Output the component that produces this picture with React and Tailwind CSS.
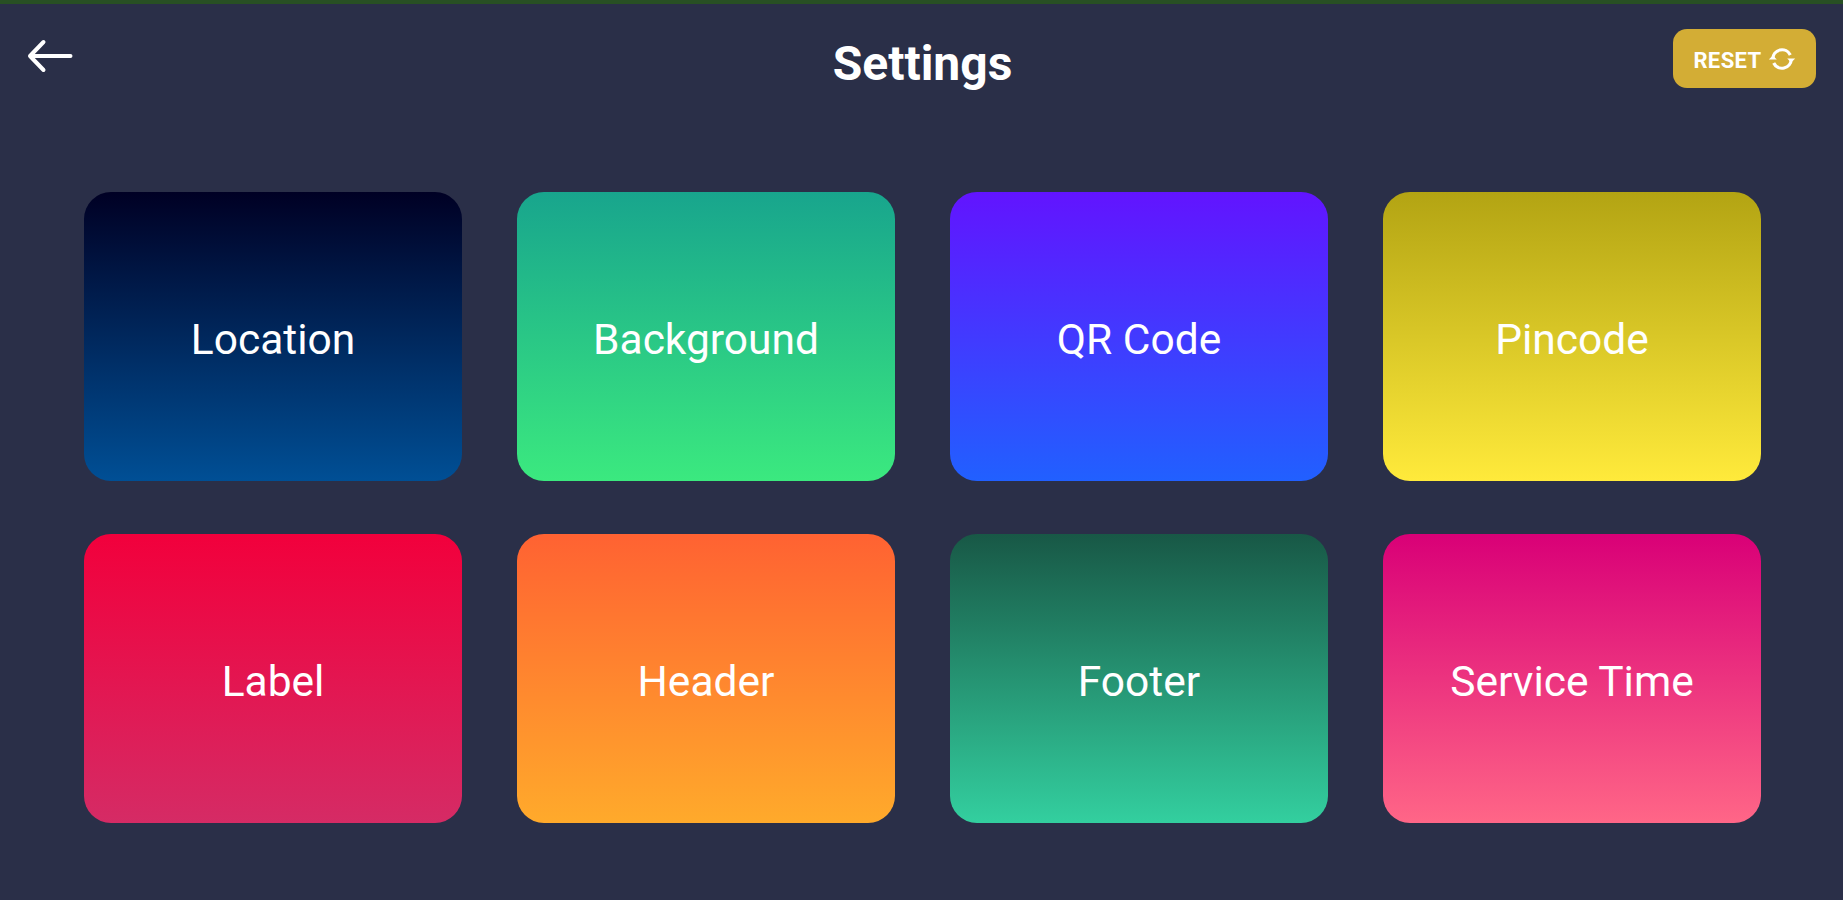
const rows = [
  [
    ["Location", "from-[#000024] to-[#004f95]"],
    ["Background", "from-[#18a58d] to-[#3be97f]"],
    ["QR Code", "from-[#6214ff] to-[#2160ff]"],
    ["Pincode", "from-[#b3a413] to-[#ffea3b]"],
  ],
  [
    ["Label", "from-[#f2003c] to-[#d52b65]"],
    ["Header", "from-[#ff6232] to-[#ffaa2b]"],
    ["Footer", "from-[#185846] to-[#33cf9f]"],
    ["Service Time", "from-[#d90077] to-[#ff6687]"],
  ],
];

export default function App() {
  return (
    <div className="flex h-[900px] w-[1843px] flex-col overflow-hidden border-t-4 border-[#285024] bg-[#2a2f48] font-[Roboto,sans-serif] text-white">
      <header className="grid h-[120px] grid-cols-[1fr_auto_1fr] items-start pr-[27px] pl-[27px]">
        <button aria-label="Back" className="mt-[34px] w-fit">
          <svg width="50" height="36" viewBox="0 0 50 36" fill="none" stroke="currentColor" strokeWidth="4" strokeLinecap="round" strokeLinejoin="round">
            <path d="M43.500 18H3M16.500 4L3 18l13.500 14" />
          </svg>
        </button>
        <h1 className="mt-[32px] pl-[2px] text-[48px] leading-[56px] font-bold">Settings</h1>
        <button className="mt-[25px] flex h-[59px] w-[143px] items-center justify-center gap-[6px] justify-self-end rounded-[14px] bg-[#d3ad35]">
          <span className="pt-[4px] text-[22px] leading-none font-bold tracking-[0.4px]">RESET</span>
          <svg width="28" height="26" viewBox="0 0 28 26" fill="none" stroke="currentColor" strokeWidth="3.2">
            <path d="M4.800 13A9.200 9.200 0 0 1 22.300 9" />
            <path d="M23.200 13A9.200 9.200 0 0 1 5.700 17" />
            <path d="M0.800 13.500L4.800 9.500L8.800 13.500Z" fill="currentColor" stroke="none" />
            <path d="M19.200 12.500L23.200 16.500L27.200 12.500Z" fill="currentColor" stroke="none" />
          </svg>
        </button>
      </header>
      <main className="mt-[68px] ml-[84px] grid w-[1677px] grid-cols-4 gap-x-[55px] gap-y-[53px]">
        {rows.flat().map(([label, colors]) => (
          <button key={label} className={`flex h-[289px] items-center justify-center rounded-[27px] bg-linear-to-b/srgb pt-[7px] text-[42.500px] ${colors}`}>
            {label}
          </button>
        ))}
      </main>
    </div>
  );
}
